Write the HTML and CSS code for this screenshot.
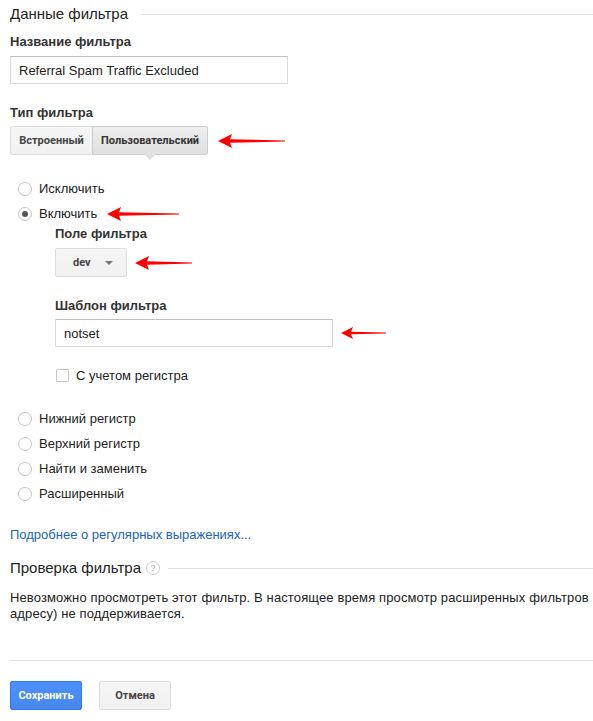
FILE: index.html
```html
<!DOCTYPE html>
<html lang="ru">
<head>
  <meta charset="UTF-8" />
  <meta name="viewport" content="width=device-width, initial-scale=1.0" />
  <title>Данные фильтра</title>
  <link rel="stylesheet" href="styles.css">
</head>
<body>
  <div class="form">
    <div class="legend"><span>Данные фильтра</span></div>

    <div class="label first">Название фильтра</div>
    <input class="text-input name-input" type="text" value="Referral Spam Traffic Excluded" />

    <div class="label type-label">Тип фильтра</div>
    <div class="row">
      <div class="segmented">
        <button class="seg">Встроенный</button>
        <button class="seg active">Пользовательский</button>
      </div>
      <svg class="arrow" width="67" height="14" viewBox="0 0 67 14"><path d="M0 7 L14 0 L12 5.3 L67 6.5 L67 7.5 L12 8.7 L14 14 Z" fill="#f00"/></svg>
    </div>

    <ul class="radios top-radios">
      <li><span class="radio"></span>Исключить</li>
      <li><span class="radio checked"></span>Включить
        <svg class="arrow" width="72" height="14" viewBox="0 0 72 14"><path d="M0 7 L14 0 L12 5.3 L72 6.5 L72 7.5 L12 8.7 L14 14 Z" fill="#f00"/></svg>
      </li>
    </ul>

    <div class="sub">
      <div class="label field-label">Поле фильтра</div>
      <div class="row">
        <button class="dropdown">dev <span class="caret"></span></button>
        <svg class="arrow small-gap" width="57" height="14" viewBox="0 0 57 14"><path d="M0 7 L14 0 L12 5.3 L57 6.5 L57 7.5 L12 8.7 L14 14 Z" fill="#f00"/></svg>
      </div>

      <div class="label pattern-label">Шаблон фильтра</div>
      <div class="row">
        <input class="text-input pattern-input" type="text" value="notset" />
        <svg class="arrow small-gap" width="45" height="12" viewBox="0 0 45 12"><path d="M0 6 L12 0 L10 4.7 L45 5.5 L45 6.5 L10 7.3 L12 12 Z" fill="#f00"/></svg>
      </div>

      <label class="check"><span class="box"></span>С учетом регистра</label>
    </div>

    <ul class="radios bottom-radios">
      <li><span class="radio"></span>Нижний регистр</li>
      <li><span class="radio"></span>Верхний регистр</li>
      <li><span class="radio"></span>Найти и заменить</li>
      <li><span class="radio"></span>Расширенный</li>
    </ul>

    <a class="link" href="#">Подробнее о регулярных выражениях...</a>

    <div class="legend verify"><span>Проверка фильтра</span><span class="help">?</span></div>

    <p class="note">Невозможно просмотреть этот фильтр. В настоящее время просмотр расширенных фильтров<br>адресу) не поддерживается.</p>

    <div class="actions">
      <button class="btn primary">Сохранить</button>
      <button class="btn">Отмена</button>
    </div>
  </div>
</body>
</html>
```

FILE: styles.css
```css
body {
  margin: 0;
  font-family: "Liberation Sans", Arial, sans-serif;
  font-size: 13px;
  color: #222;
  background: #fff;
  overflow: hidden;
}
.form {
  padding: 4px 0 0 10px;
}
.legend {
  display: flex;
  align-items: center;
  font-size: 15px;
  line-height: 20px;
  color: #222;
}
.legend::after {
  content: "";
  flex: 1;
  height: 1px;
  background: #e0e0e0;
  margin-left: 13px;
}
.label {
  font-weight: bold;
  color: #333;
  line-height: 16px;
  margin: 6px 0 6px;
}
.label.first {
  margin-top: 10px;
}
.text-input {
  display: block;
  box-sizing: border-box;
  height: 28px;
  padding: 0 8px;
  border: 1px solid #d9d9d9;
  border-top-color: #c0c0c0;
  font-family: inherit;
  font-size: 13px;
  color: #222;
  outline: none;
}
.name-input {
  width: 278px;
}
.type-label {
  margin-top: 21px;
  margin-bottom: 5px;
}
.row {
  display: flex;
  align-items: center;
}
.arrow {
  display: block;
  margin-left: 10px;
}
.arrow.small-gap {
  margin-left: 8px;
}
.segmented {
  display: flex;
  position: relative;
}
.seg {
  height: 29px;
  padding: 0 8px;
  border: 1px solid #dcdcdc;
  background: linear-gradient(#f5f5f5, #f1f1f1);
  font-family: Roboto, "Liberation Sans", sans-serif;
  font-size: 11px;
  font-weight: bold;
  color: #444;
  cursor: pointer;
}
.seg:first-child {
  border-radius: 2px 0 0 2px;
  width: 83px;
}
.seg.active {
  position: relative;
  width: 116px;
  margin-left: -1px;
  border-color: #ccc;
  border-radius: 0 2px 2px 0;
  background: linear-gradient(#eee, #e0e0e0);
  color: #333;
}
.seg.active::after {
  content: "";
  position: absolute;
  left: 50%;
  bottom: -6px;
  margin-left: -6px;
  border: 6px solid transparent;
  border-bottom: 0;
  border-top-color: #e0e0e0;
}
.radios {
  list-style: none;
  margin: 0;
  padding: 0 0 0 8px;
}
.radios li {
  display: flex;
  align-items: center;
  height: 25px;
  font-size: 13px;
  color: #222;
}
.top-radios {
  margin-top: 21px;
}
.radio {
  box-sizing: border-box;
  width: 14px;
  height: 14px;
  border: 1px solid #c4c4c4;
  border-radius: 50%;
  background: #fff;
  margin-right: 7px;
  position: relative;
}
.radio.checked::after {
  content: "";
  position: absolute;
  left: 3px;
  top: 3px;
  width: 6px;
  height: 6px;
  border-radius: 50%;
  background: #555;
}
.sub {
  padding-left: 45px;
}
.field-label {
  margin-top: 0;
}
.dropdown {
  box-sizing: border-box;
  width: 72px;
  height: 29px;
  border: 1px solid #dcdcdc;
  border-radius: 2px;
  background: linear-gradient(#f5f5f5, #f1f1f1);
  font-family: Roboto, "Liberation Sans", sans-serif;
  font-size: 11px;
  font-weight: bold;
  color: #444;
  text-align: left;
  padding-left: 17px;
  display: flex;
  align-items: center;
}
.caret {
  margin-left: 14px;
  border: 4px solid transparent;
  border-bottom: 0;
  border-top-color: #777;
  margin-top: 1px;
}
.pattern-label {
  margin-top: 21px;
  margin-bottom: 5px;
}
.pattern-input {
  width: 278px;
}
.check {
  display: flex;
  align-items: center;
  margin: 21px 0 0 1px;
  font-size: 13px;
  color: #222;
}
.box {
  box-sizing: border-box;
  width: 13px;
  height: 13px;
  border: 1px solid #c6c6c6;
  border-radius: 1px;
  margin-right: 7px;
}
.bottom-radios {
  margin-top: 23px;
}
.link {
  display: inline-block;
  margin-top: 21px;
  color: #1a65b0;
  text-decoration: none;
  font-size: 13px;
}
.verify {
  margin-top: 16px;
}
.help {
  box-sizing: border-box;
  width: 14px;
  height: 14px;
  margin-left: 5px;
  border: 1px solid #ccc;
  border-radius: 50%;
  font-size: 9px;
  line-height: 12px;
  text-align: center;
  color: #aaa;
}
.verify::after {
  margin-left: 8px;
}
.note {
  margin: 12px 0 0;
  line-height: 16px;
  white-space: nowrap;
  letter-spacing: 0.12px;
  color: #222;
}
.actions {
  margin-top: 38px;
  border-top: 1px solid #e0e0e0;
  padding-top: 20px;
  display: flex;
  gap: 17px;
}
.btn {
  box-sizing: border-box;
  width: 72px;
  height: 29px;
  border: 1px solid #dcdcdc;
  border-radius: 2px;
  background: linear-gradient(#f5f5f5, #f1f1f1);
  font-family: Roboto, "Liberation Sans", sans-serif;
  font-size: 11px;
  font-weight: bold;
  color: #444;
}
.btn.primary {
  border-color: #3079ed;
  background: linear-gradient(#4d90fe, #4787ed);
  color: #fff;
}
```
